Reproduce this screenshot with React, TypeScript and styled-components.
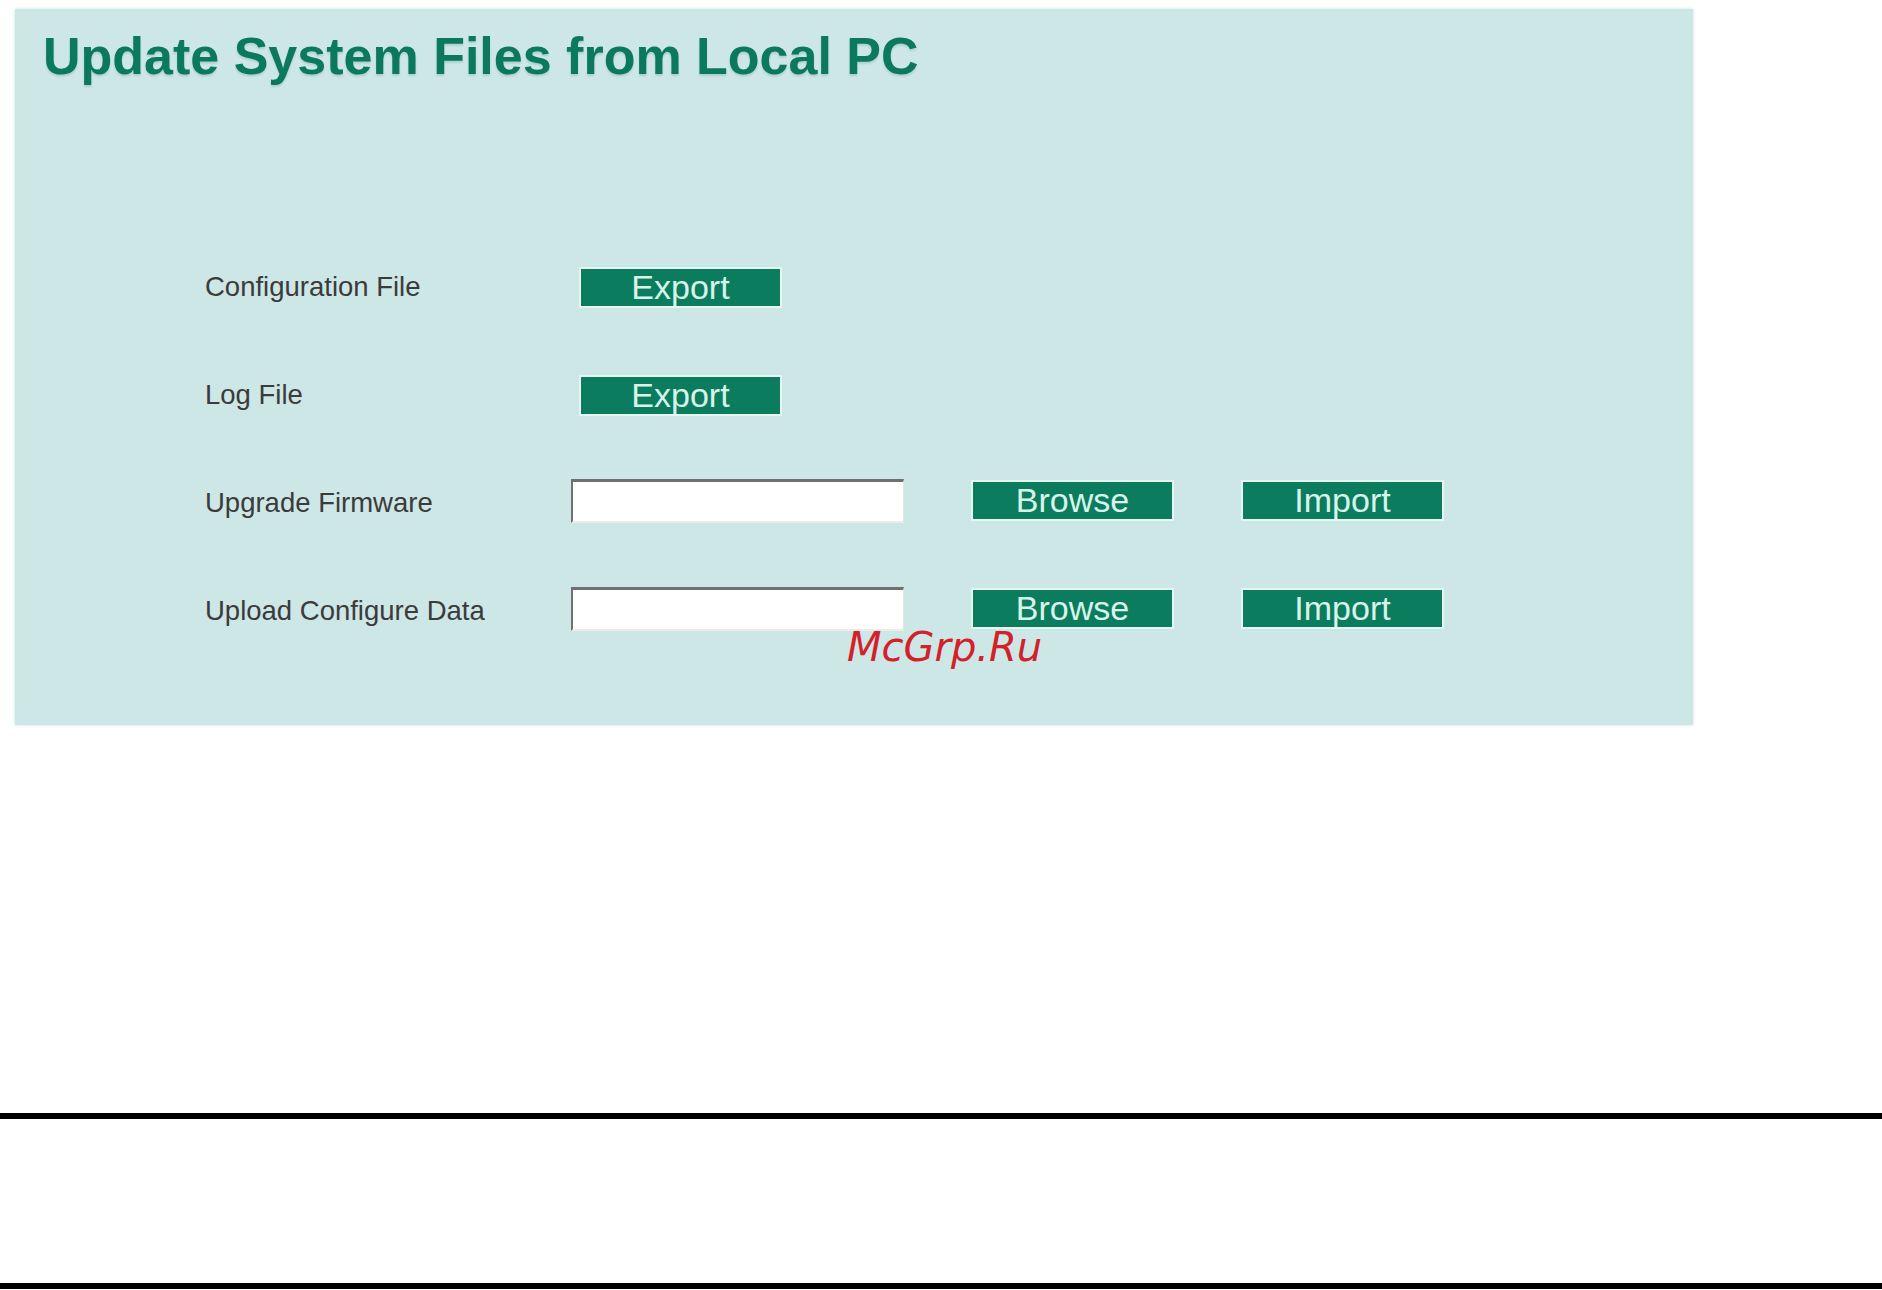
import {Fragment} from "react";
import styled, {createGlobalStyle} from "styled-components";

interface IRow {
  label: string;
  kind: "export" | "import";
}

const rows: IRow[] = [
  {label: "Configuration File", kind: "export"},
  {label: "Log File", kind: "export"},
  {label: "Upgrade Firmware", kind: "import"},
  {label: "Upload Configure Data", kind: "import"},
];

const GlobalStyle = createGlobalStyle`
  html, body {
    margin: 0;
    padding: 0;
    background: #ffffff;
  }
  body {
    font-family: "Liberation Sans", Arial, sans-serif;
  }
`;

const Page = styled.div`
  position: relative;
  width: 1882px;
  height: 1290px;
  padding-top: 9px;
  box-sizing: border-box;
  overflow: hidden;
`;

const Panel = styled.section`
  margin-left: 15px;
  width: 1678px;
  height: 716px;
  box-sizing: border-box;
  padding: 21px 0 0 28px;
  background-color: #cde6e6;
  box-shadow: 0 0 3px rgba(190, 220, 220, 0.8);
`;

const Title = styled.h1`
  margin: 0;
  font-size: 52px;
  line-height: 52px;
  font-weight: bold;
  color: #0b7a5c;
  text-shadow: 0 2px 2px rgba(0, 80, 60, 0.15);
`;

const Form = styled.div`
  display: grid;
  grid-template-columns: 299px 333px 203px 204px;
  column-gap: 67px;
  grid-auto-rows: 108px;
  align-items: center;
  margin: 151px 0 0 162px;
`;

const Label = styled.span`
  font-size: 27.5px;
  color: #3b3b3b;
`;

const Button = styled.button<{$offset?: number; $lift?: number}>`
  width: 203px;
  height: 41px;
  margin: 0 0 ${(props) => (props.$lift ?? 0) * 2}px ${(props) => props.$offset ?? 0}px;
  padding: 0;
  box-sizing: border-box;
  border: 2px solid #e6f7f2;
  background-color: #0b7d5e;
  color: #d8f3ea;
  font-family: "Liberation Sans", Arial, sans-serif;
  font-size: 34px;
  line-height: 37px;
`;

const FileInput = styled.div`
  width: 333px;
  height: 44px;
  margin-bottom: 4px;
  box-sizing: border-box;
  background: #ffffff;
  border-top: 3px solid #707070;
  border-left: 2px solid #707070;
  border-right: 1px solid #e4e4e4;
  border-bottom: 2px solid #ececec;
`;

const Watermark = styled.div`
  position: absolute;
  left: 847px;
  top: 627px;
  font-family: "DejaVu Sans", sans-serif;
  font-style: oblique;
  font-size: 40px;
  line-height: 40px;
  color: #d42029;
`;

const Rule = styled.hr<{$gap: number}>`
  margin: ${(props) => props.$gap}px 0 0;
  height: 6px;
  border: none;
  background: #000000;
`;

export default function App() {
  return (
    <Page>
      <GlobalStyle />
      <Panel>
        <Title>Update System Files from Local PC</Title>
        <Form>
          {rows.map((row) => (
            <Fragment key={row.label}>
              <Label>{row.label}</Label>
              {row.kind === "export" ? (
                <>
                  <Button $offset={8}>Export</Button>
                  <span />
                  <span />
                </>
              ) : (
                <>
                  <FileInput />
                  <Button $lift={3}>Browse</Button>
                  <Button $lift={3}>Import</Button>
                </>
              )}
            </Fragment>
          ))}
        </Form>
      </Panel>
      <Watermark>McGrp.Ru</Watermark>
      <Rule $gap={388} />
      <Rule $gap={164} />
    </Page>
  );
}
